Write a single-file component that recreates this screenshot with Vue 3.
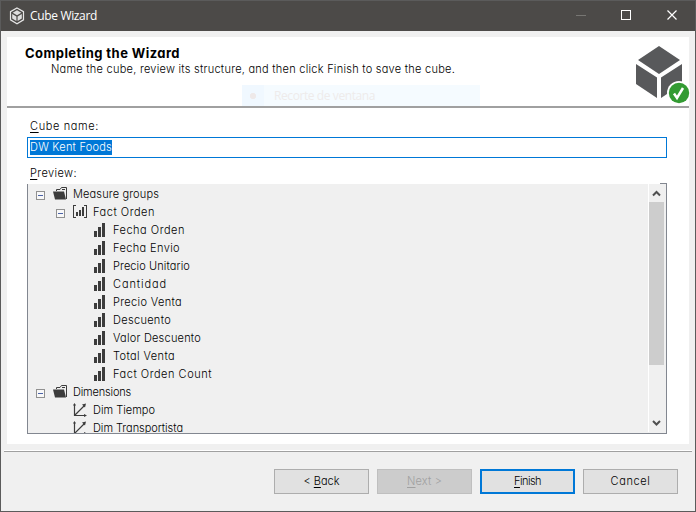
<script setup>
const rows = [
  { level: 0, icon: 'folder', text: 'Measure groups', width: 86, toggle: true },
  { level: 1, icon: 'group', text: 'Fact Orden', width: 62, toggle: true },
  { level: 2, icon: 'bars', text: 'Fecha Orden', width: 72 },
  { level: 2, icon: 'bars', text: 'Fecha Envio', width: 67 },
  { level: 2, icon: 'bars', text: 'Precio Unitario', width: 77 },
  { level: 2, icon: 'bars', text: 'Cantidad', width: 54 },
  { level: 2, icon: 'bars', text: 'Precio Venta', width: 69 },
  { level: 2, icon: 'bars', text: 'Descuento', width: 58 },
  { level: 2, icon: 'bars', text: 'Valor Descuento', width: 88 },
  { level: 2, icon: 'bars', text: 'Total Venta', width: 62 },
  { level: 2, icon: 'bars', text: 'Fact Orden Count', width: 99 },
  { level: 0, icon: 'folder', text: 'Dimensions', width: 58, toggle: true },
  { level: 1, icon: 'axes', text: 'Dim Tiempo', width: 62 },
  { level: 1, icon: 'axes', text: 'Dim Transportista', width: 90 },
]

// Tracks a label out or in so that it takes the given width in pixels.
const vFit = {
  mounted(el, { value }) {
    const apply = () => {
      el.style.letterSpacing = '0px'
      const natural = el.getBoundingClientRect().width
      el.style.letterSpacing = (value - natural) / el.textContent.length + 'px'
    }
    apply()
    document.fonts.ready.then(apply)
  },
}
</script>

<template>
  <div class="window">
    <header class="titlebar">
      <svg class="app-icon" width="16" height="18" viewBox="0 0 16 18">
        <path d="M8 1 L14.5 4.7 V12.8 L8 16.7 L1.5 12.8 V4.7 Z" fill="none" stroke="#e6e6e6" stroke-width="1.2" />
        <path d="M8 3.2 L12.3 5.7 L8 8.2 L3.7 5.7 Z M3.2 7 L7.4 9.4 V14 L3.2 11.6 Z M12.8 7 L8.6 9.4 V14 L12.8 11.6 Z" fill="#dedede" />
      </svg>
      <span class="title"><span v-fit="67">Cube Wizard</span></span>
      <svg class="controls" width="138" height="30" viewBox="0 0 138 30" fill="none" shape-rendering="crispEdges">
        <path d="M19 14.5 H29" stroke="#777673" />
        <rect x="64.5" y="9.5" width="9" height="9" stroke="#fff" />
        <path d="M110.5 9.5 L119.5 18.5 M119.5 9.5 L110.5 18.5" stroke="#fff" stroke-width="1.2" shape-rendering="auto" />
      </svg>
    </header>

    <main class="page">
      <section class="heading">
        <div class="words">
          <h1><span v-fit="155">Completing the Wizard</span></h1>
          <p><span v-fit="404">Name the cube, review its structure, and then click Finish to save the cube.</span></p>
        </div>
        <div class="ghost"><i class="ghost-mark"></i><span class="ghost-text"><span v-fit="101">Recorte de ventana</span></span></div>
        <svg class="cube" width="55" height="60" viewBox="0 0 55 60">
          <path d="M24 1 L45 15 L24 29 L3 15 Z M1 19 L22 32.5 V53 L1 39 Z M47 19 L26 32.5 V53 L47 39 Z" fill="#58595b" />
          <circle cx="44" cy="48" r="12" fill="#fff" />
          <circle cx="44" cy="48" r="10.2" fill="#339b33" />
          <path d="M39 48.5 L42 53 L48 43" fill="none" stroke="#fff" stroke-width="2.5" />
        </svg>
      </section>

      <section class="fields">
        <label class="name-label"><span v-fit="69"><u>C</u>ube name:</span></label>
        <div class="input"><span class="selected"><span v-fit="82">DW Kent Foods</span></span></div>
        <label class="preview-label"><span v-fit="47"><u>P</u>review:</span></label>
        <div class="tree">
          <ul class="rows">
            <li v-for="row in rows" :key="row.text" :class="['row', 'level-' + row.level]">
              <svg v-if="row.toggle" class="toggle" width="9" height="9" viewBox="0 0 9 9" shape-rendering="crispEdges">
                <rect x=".5" y=".5" width="8" height="8" rx="1" fill="#f8f8f8" stroke="#919191" />
                <path d="M2 4.5 H7" stroke="#4b63a7" />
              </svg>
              <svg class="icon" width="16" height="16" viewBox="0 0 16 16">
                <g v-if="row.icon === 'folder'">
                  <path d="M3.5 5 V3.5 H7 L8.5 1.5 H13.5 V13" fill="none" stroke="#3c3c3c" />
                  <path d="M0 5.5 H11 L13 13.5 H2 Z" fill="#3c3c3c" />
                  <path d="M9 3.5 H12" stroke="#3c3c3c" />
                </g>
                <g v-else-if="row.icon === 'group'" shape-rendering="crispEdges">
                  <path d="M3 1.5 H.5 V13.5 H3 M11 1.5 H13.5 V13.5 H11" fill="none" stroke="#3c3c3c" />
                  <path d="M3 8h2v4H3z M6 6h2v6H6z M9 3h2v9H9z" fill="#3c3c3c" />
                </g>
                <path v-else-if="row.icon === 'bars'" d="M1 9h3v6H1z M5 5h3v10H5z M9 1h3v14H9z" fill="#3c3c3c" shape-rendering="crispEdges" />
                <g v-else fill="#3c3c3c">
                  <path d="M1.5 2 V13.5 H12 M1.5 13.5 L11.5 3.5" fill="none" stroke="#3c3c3c" stroke-width="1.2" />
                  <path d="M0 3.5 L1.5 1 L3 3.5Z M11 12 L14 13.5 L11 15Z M9 2.5 L13 1.5 L12 5.5Z" />
                </g>
              </svg>
              <span class="text"><span v-fit="row.width">{{ row.text }}</span></span>
            </li>
          </ul>
          <div class="scrollbar">
            <svg width="15" height="18" viewBox="0 0 15 18"><path d="M4 11.5 L7.5 8 L11 11.5" fill="none" stroke="#505050" stroke-width="2" /></svg>
            <div class="thumb"></div>
            <svg width="15" height="18" viewBox="0 0 15 18"><path d="M4 7 L7.5 10.5 L11 7" fill="none" stroke="#505050" stroke-width="2" /></svg>
          </div>
          <i class="corner"></i>
        </div>
      </section>
    </main>

    <footer class="actions">
      <button><span v-fit="36">&lt; <u>B</u>ack</span></button>
      <button class="disabled"><span v-fit="35"><u>N</u>ext &gt;</span></button>
      <button class="primary"><span v-fit="27"><u>F</u>inish</span></button>
      <button><span v-fit="40">Cancel</span></button>
    </footer>
  </div>
</template>

<style>
body { margin: 0; }
</style>

<style scoped>
* { box-sizing: border-box; }
.window {
  width: 696px; height: 512px; display: flex; flex-direction: column;
  background: #f0f0f0; border: 1px solid #5b5b5b;
  font: 300 11px/18px Inter, "Liberation Sans", sans-serif;
  font-feature-settings: "cv11"; color: #000; white-space: nowrap; overflow: hidden;
}
.titlebar { height: 30px; flex: none; display: flex; align-items: center; background: #4c4a48; color: #fff; }
.app-icon { margin-left: 8px; }
.title { margin-left: 5px; flex: 1; font: 12px/18px "Open Sans", "Noto Sans", sans-serif; }
.controls { flex: none; }
.page { margin: 6px 6px 0 6px; height: 407px; flex: none; background: #fff; display: flex; flex-direction: column; }
.heading { height: 71px; flex: none; border-bottom: 2px solid #a0a0a0; position: relative; display: flex; justify-content: space-between; }
.words { padding: 7px 0 0 18px; }
h1 { margin: 0; font-size: 13px; line-height: 18px; font-weight: 700; }
p { margin: 0 0 0 26px; line-height: 14px; }
.ghost { position: absolute; left: 235px; top: 48px; width: 238px; height: 21px; display: flex; align-items: center; background: #f5fbff; color: #eeebeb; font: 12px/20px "Open Sans", sans-serif; }
.ghost-mark { width: 22px; height: 21px; background: radial-gradient(circle at 11px 11px, #eee9e9 2.8px, #f0f8ff 3.4px); }
.ghost-text { margin-left: 10px; }
.cube { margin-top: 8px; margin-right: -1px; flex: none; position: relative; }
.fields { padding: 0 22px 0 20px; display: flex; flex-direction: column; }
label { padding-left: 3px; height: 18px; }
.name-label { margin-top: 9px; }
.input { height: 21px; margin-top: 2px; border: 1px solid #0078d7; padding: 2px; display: flex; }
.selected { background: #0078d7; color: #fff; height: 15px; line-height: 15px; }
.preview-label { margin-top: 6px; }
.tree { position: relative; height: 250px; border: solid #828790; border-width: 0 1px 1px; background: #f0f0f0; display: flex; justify-content: space-between; margin-top: 2px; }
.rows { list-style: none; margin: 0; padding: 1px 0 0 8px; height: 249px; overflow: hidden; }
.row { height: 18px; display: flex; align-items: center; }
.toggle { margin: 3px 8px 0 0; flex: none; }
.icon { flex: none; margin-right: 4px; }
.level-1 { padding-left: 20px; }
.level-1:not(:has(.toggle)) { padding-left: 37px; }
.level-2 { padding-left: 57px; }
u { text-underline-offset: 2px; text-decoration-thickness: 1px; }
.scrollbar { width: 18px; height: 248px; border-left: 1px solid #fff; display: flex; flex-direction: column; }
.thumb { width: 15px; height: 163px; background: #cdcdcd; margin-bottom: auto; }
.corner { position: absolute; right: -1px; top: -1px; width: 7px; height: 1px; background: #828790; }
.actions { margin: 6px 3px 0; border-top: 1px solid #fff; box-shadow: inset 0 1px #a0a0a0; padding: 18px 14px 0; display: flex; justify-content: flex-end; gap: 8px; }
button { width: 95px; height: 25px; padding: 0 0 1px; border: 1px solid #adadad; background: #e1e1e1; color: #000; font: inherit; font-feature-settings: inherit; }
.disabled { border-color: #bfbfbf; background: #ccc; color: #a0a0a0; }
.primary { border: 2px solid #0078d7; }
</style>
